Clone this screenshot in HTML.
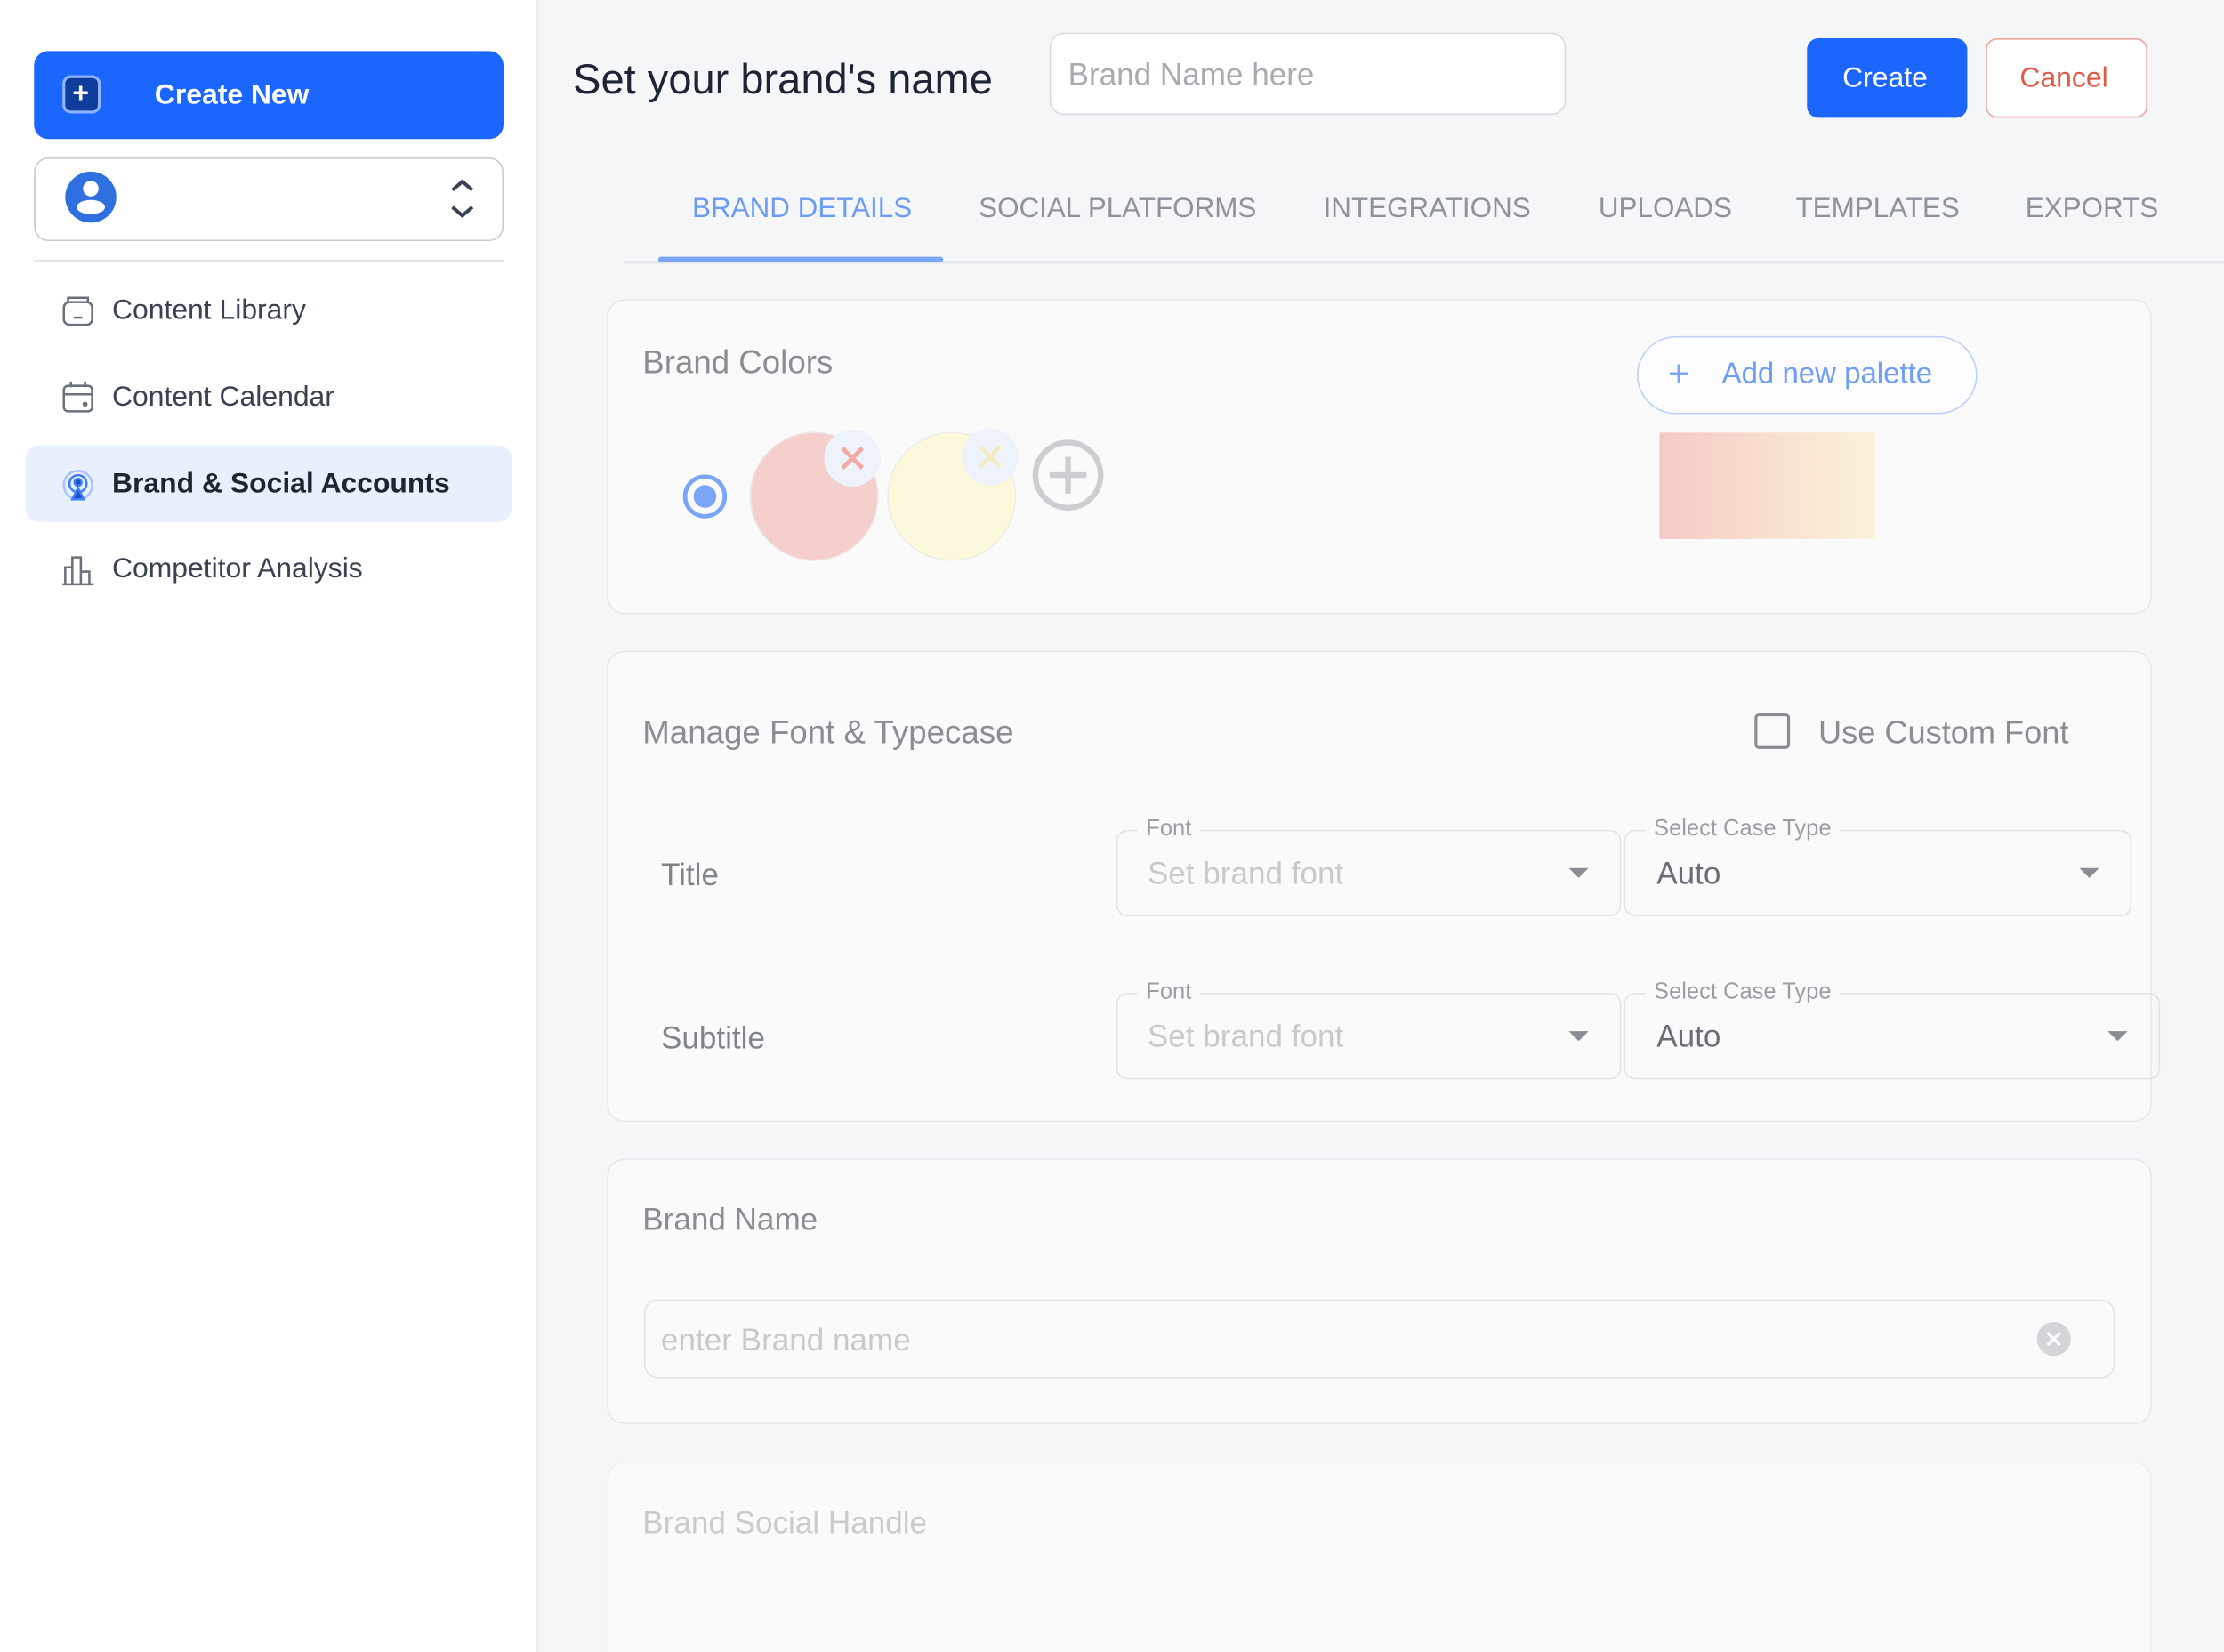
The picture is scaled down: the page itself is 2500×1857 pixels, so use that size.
<!DOCTYPE html>
<html><head><meta charset="utf-8"><style>
*{box-sizing:border-box;margin:0;padding:0}
html,body{width:2500px;height:1857px;overflow:hidden;background:#f5f6f8}
#w{position:absolute;left:0;top:0;width:1568px;height:1165px;overflow:hidden;transform:scale(1.59439);transform-origin:0 0;font-family:"Liberation Sans",sans-serif;background:#f5f6f8}
.a{position:absolute}
.t{position:absolute;white-space:nowrap;line-height:1}
.card{position:absolute;left:428px;width:1089px;background:#fafafa;border:1.5px solid #e7e8eb;border-radius:12px}
.fs{position:absolute;border:1.5px solid #e3e4e7;border-radius:8px;height:61px}
.lg{position:absolute;top:-10px;left:14px;background:#fafafa;padding:0 6px;font-size:16px;color:#9a9da3;line-height:18px}
.tri{position:absolute;width:0;height:0;border-left:7px solid transparent;border-right:7px solid transparent;border-top:7px solid #8a8d93}
</style></head><body><div id="w">
<div class="a" style="left:0;top:0;width:380px;height:1165px;background:#fff;border-right:2px solid #eceef2"></div>
<div class="a" style="left:24px;top:36px;width:331px;height:62px;background:#1a66ff;border-radius:10px"></div>
<div class="a" style="left:44px;top:53px;width:27px;height:27px;border:2px solid #8fb3ff;border-radius:6px;background:#0f3d9e"></div>
<div class="t" style="left:51px;top:56px;color:#fff;font-size:20px;font-weight:bold">+</div>
<div class="t" style="left:109px;top:57px;color:#fff;font-size:20px;font-weight:bold">Create New</div>
<div class="a" style="left:24px;top:111px;width:331px;height:59px;border:1.5px solid #c8cbd0;border-radius:10px"></div>
<svg class="a" style="left:45px;top:120px" width="38" height="38" viewBox="0 0 38 38"><circle cx="19" cy="19" r="18" fill="#2f6fe0"/><circle cx="19" cy="13" r="5.5" fill="#fff"/><ellipse cx="19" cy="26" rx="10" ry="5" fill="#fff"/></svg>
<svg class="a" style="left:315px;top:124px" width="22" height="32" viewBox="0 0 22 32"><path d="M4 10l7-6 7 6M4 22l7 6 7-6" stroke="#3a4150" stroke-width="2.5" fill="none"/></svg>
<div class="a" style="left:24px;top:183px;width:331px;height:2px;background:#e2e4e8"></div>
<svg class="a" style="left:43px;top:207px" width="24" height="24" viewBox="0 0 24 24" fill="none" stroke="#6b717c" stroke-width="1.6"><rect x="2" y="6" width="20" height="16" rx="4"/><path d="M5 6V3h14v3M9 17h6"/></svg>
<div class="t" style="left:79px;top:209px;font-size:20px;color:#3a4150">Content Library</div>
<svg class="a" style="left:43px;top:268px" width="24" height="24" viewBox="0 0 24 24" fill="none" stroke="#6b717c" stroke-width="1.6"><rect x="2" y="4" width="20" height="18" rx="3"/><path d="M2 10h20M7 1v4M17 1v4"/><circle cx="17" cy="17" r="1" fill="#6b717c"/></svg>
<div class="t" style="left:79px;top:270px;font-size:20px;color:#3a4150">Content Calendar</div>
<div class="a" style="left:18px;top:314px;width:343px;height:54px;background:#e8effd;border-radius:10px"></div>
<svg class="a" style="left:43px;top:330px" width="24" height="24" viewBox="0 0 24 24" fill="none" stroke="#3f7ff5" stroke-width="1.6"><circle cx="12" cy="12" r="10" stroke="#a9c4fa"/><circle cx="12" cy="11" r="6"/><circle cx="12" cy="10" r="2.5" fill="#1d4fc0"/><path d="M8 22l4-8 4 8z" fill="#1d4fc0"/></svg>
<div class="t" style="left:79px;top:331px;font-size:20px;color:#1d2433;font-weight:bold">Brand &amp; Social Accounts</div>
<svg class="a" style="left:43px;top:390px" width="24" height="24" viewBox="0 0 24 24" fill="none" stroke="#6b717c" stroke-width="1.6"><path d="M1 22h22M3 22V10h5v12M8 22V3h6v19M14 22V13h6v9"/></svg>
<div class="t" style="left:79px;top:391px;font-size:20px;color:#3a4150">Competitor Analysis</div>
<div class="t" style="left:404px;top:42px;font-size:29.5px;color:#1d2433">Set your brand's name</div>
<div class="a" style="left:740px;top:23px;width:364px;height:58px;background:#fff;border:1.5px solid #d8dade;border-radius:10px"></div>
<div class="t" style="left:753px;top:42px;font-size:22px;color:#a8abb1">Brand Name here</div>
<div class="a" style="left:1274px;top:27px;width:113px;height:56px;background:#1a66ff;border-radius:8px"></div>
<div class="t" style="left:1299px;top:45px;font-size:20px;color:#fff">Create</div>
<div class="a" style="left:1400px;top:27px;width:114px;height:56px;border:1.5px solid #eaa69c;border-radius:8px;background:#fff"></div>
<div class="t" style="left:1424px;top:45px;font-size:20px;color:#e05a45">Cancel</div>
<div class="a" style="left:440px;top:184px;width:1128px;height:1.5px;background:#e6e7ea"></div>
<div class="t" style="left:488px;top:138px;font-size:19.7px;color:#6b9bf5">BRAND DETAILS</div>
<div class="a" style="left:464px;top:181px;width:201px;height:4px;background:#7aa6f5;border-radius:2px"></div>
<div class="t" style="left:690px;top:138px;font-size:19.7px;color:#8e939b">SOCIAL PLATFORMS</div>
<div class="t" style="left:933px;top:138px;font-size:19.7px;color:#8e939b">INTEGRATIONS</div>
<div class="t" style="left:1127px;top:138px;font-size:19.7px;color:#8e939b">UPLOADS</div>
<div class="t" style="left:1266px;top:138px;font-size:19.7px;color:#8e939b">TEMPLATES</div>
<div class="t" style="left:1428px;top:138px;font-size:19.7px;color:#8e939b">EXPORTS</div>
<div class="card" style="top:211px;height:222px"></div>
<div class="t" style="left:453px;top:244px;font-size:23px;color:#8a8d94">Brand Colors</div>
<div class="a" style="left:1154px;top:237px;width:240px;height:55px;border:1.5px solid #bcd0f7;border-radius:28px;background:#fdfdff"></div>
<div class="t" style="left:1176px;top:250px;font-size:26px;color:#7aa6f5">+</div>
<div class="t" style="left:1214px;top:254px;font-size:20.7px;color:#6e9ef5">Add new palette</div>
<div class="a" style="left:1170px;top:305px;width:152px;height:75px;background:linear-gradient(90deg,#f5c9c6,#faf3d6)"></div>
<svg class="a" style="left:470px;top:290px" width="330" height="120" viewBox="470 290 330 120">
<circle cx="497" cy="350" r="14" fill="none" stroke="#7aa6f5" stroke-width="3"/><circle cx="497" cy="350" r="8" fill="#7aa6f5"/>
<circle cx="574" cy="350" r="45" fill="#f5cfcb" stroke="#efe5e4"/>
<circle cx="601" cy="323" r="20" fill="#eef2fa"/><path d="M594 316l14 14M608 316l-14 14" stroke="#f3a9a2" stroke-width="3"/>
<circle cx="671" cy="350" r="45" fill="#fbf8dc" stroke="#efeee4"/>
<circle cx="698" cy="322" r="20" fill="#eef2fa"/><path d="M691 315l14 14M705 315l-14 14" stroke="#f2ecc2" stroke-width="3"/>
<circle cx="753" cy="335" r="23" fill="none" stroke="#cdced2" stroke-width="4"/><path d="M753 322v26M740 335h26" stroke="#cdced2" stroke-width="4"/>
</svg>
<div class="card" style="top:459px;height:332px"></div>
<div class="t" style="left:453px;top:505px;font-size:23px;color:#8a8d94">Manage Font &amp; Typecase</div>
<div class="a" style="left:1237px;top:503px;width:25px;height:25px;border:2px solid #8a8d94;border-radius:3px"></div>
<div class="t" style="left:1282px;top:505px;font-size:22.7px;color:#8a8d94">Use Custom Font</div>
<div class="t" style="left:466px;top:606px;font-size:22px;color:#7f838a">Title</div>
<div class="t" style="left:466px;top:721px;font-size:22px;color:#7f838a">Subtitle</div>
<div class="fs" style="left:787px;top:585px;width:356px"><div class="lg">Font</div><div class="t" style="left:21px;top:19px;font-size:22px;color:#c7c9cd">Set brand font</div><div class="tri" style="left:318px;top:26px"></div></div>
<div class="fs" style="left:1145px;top:585px;width:358px"><div class="lg">Select Case Type</div><div class="t" style="left:22px;top:19px;font-size:22px;color:#6a6e76">Auto</div><div class="tri" style="left:320px;top:26px"></div></div>
<div class="fs" style="left:787px;top:700px;width:356px"><div class="lg">Font</div><div class="t" style="left:21px;top:19px;font-size:22px;color:#c7c9cd">Set brand font</div><div class="tri" style="left:318px;top:26px"></div></div>
<div class="fs" style="left:1145px;top:700px;width:378px"><div class="lg">Select Case Type</div><div class="t" style="left:22px;top:19px;font-size:22px;color:#6a6e76">Auto</div><div class="tri" style="left:340px;top:26px"></div></div>
<div class="card" style="top:817px;height:187px"></div>
<div class="t" style="left:453px;top:849px;font-size:22px;color:#8a8d94">Brand Name</div>
<div class="a" style="left:454px;top:916px;width:1037px;height:56px;border:1.5px solid #e3e4e7;border-radius:10px"></div>
<div class="t" style="left:466px;top:934px;font-size:22px;color:#c7c9cd">enter Brand name</div>
<svg class="a" style="left:1435px;top:931px" width="26" height="26" viewBox="0 0 26 26"><circle cx="13" cy="13" r="12" fill="#d3d5d9"/><path d="M8.5 8.5l9 9M17.5 8.5l-9 9" stroke="#fafafa" stroke-width="2.2"/></svg>
<div class="card" style="top:1031px;height:160px;border-color:#eef0f2"></div>
<div class="t" style="left:453px;top:1063px;font-size:22px;color:#c9cbcf">Brand Social Handle</div>
</div></body></html>
